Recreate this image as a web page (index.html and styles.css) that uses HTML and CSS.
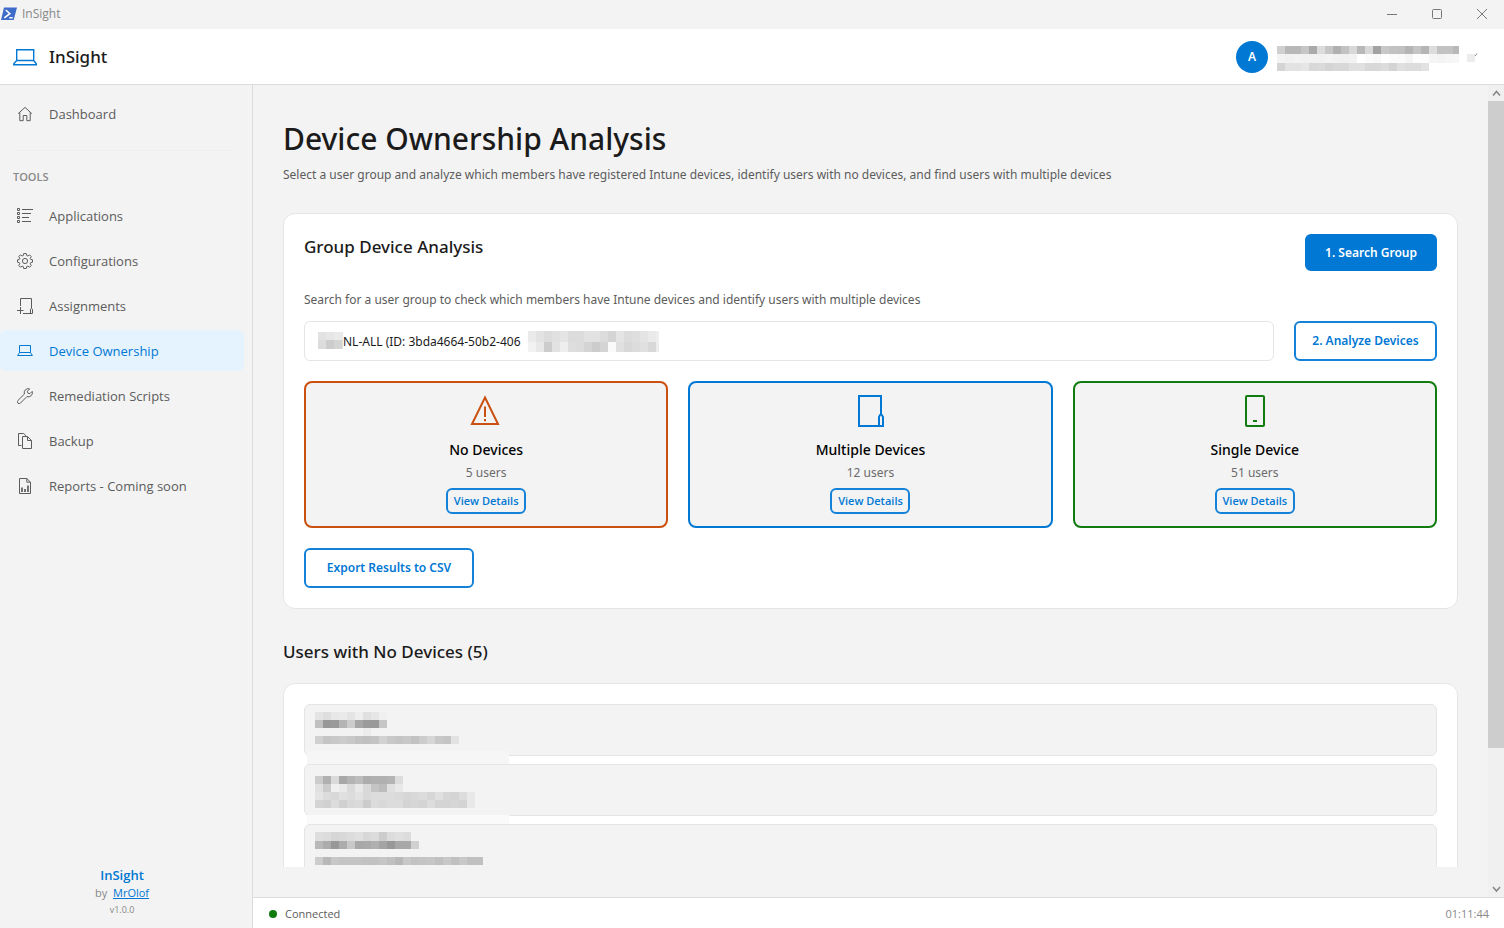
FILE: index.html
```html
<!DOCTYPE html>
<html lang="en">
<head>
<meta charset="utf-8">
<title>InSight</title>
<link rel="stylesheet" href="styles.css">
</head>
<body>
<div class="app">
  <div class="titlebar">
    <svg class="ps-icon" width="17" height="14" viewBox="0 0 17 14"><path d="M3 .5h13L12.700 13H0z" fill="#3f6bc9"/><path d="M4.800 3l4 3.600-5.500 4.200M8.300 10.800h3.400" fill="none" stroke="#fff" stroke-width="1.600"/></svg>
    <span class="titlebar-name">InSight</span>
    <div class="window-buttons">
      <button type="button" aria-label="Minimize"><svg width="12" height="12" viewBox="0 0 12 12"><path d="M1 6.500h10"/></svg></button>
      <button type="button" aria-label="Maximize"><svg width="12" height="12" viewBox="0 0 12 12"><rect x="1.500" y="1.500" width="9" height="9" rx="1"/></svg></button>
      <button type="button" aria-label="Close"><svg width="12" height="12" viewBox="0 0 12 12"><path d="M1 1l10 10M11 1L1 11"/></svg></button>
    </div>
  </div>

  <header class="header">
    <svg class="line-icon accent" width="24" height="18" viewBox="0 0 24 18"><path d="M3.700 12.500V1.700h17v10.800M3.700 12.500h17l2.600 3.200v1H.8v-1z"/></svg>
    <span class="brand">InSight</span>
    <div class="account">
      <span class="avatar">A</span>
      <svg class="mosaic account-text" width="182" height="26" data-rows="8:d0 b8 b8 c6 aa dc c6 b0 c2 d8 b8 d8 a2 c8 c2 c0 b4 c4 b4 dc c2 c2 b8|9:f3 f1 f3 f1 f1 f1 f3 f1 f0 f2 ff fb f8 fe fb fa f5 fd fc f5 f3 f6 f7|8:d4 e2 e2 e6 d8 da d4 d8 d8 e0 e0 d8 d8 dc d4 e0 dc dc e2"></svg>
      <svg class="chevron" width="12" height="12" viewBox="0 0 12 12"><path d="M1 3h8v8H1z" fill="#ececec"/><path d="M9 5l2-2.500" stroke="#888"/></svg>
    </div>
  </header>

  <div class="body">
    <aside class="sidebar">
      <nav class="nav">
        <a class="nav-item" href="#dashboard"><svg class="line-icon" width="16" height="16" viewBox="0 0 16 16"><path d="M1.200 7.600L8 1.400l6.800 6.200M2.800 6.300v8.400h3.400V9.500h3.600v5.200h3.400V6.300"/></svg>Dashboard</a>
        <div class="nav-divider"></div>
        <div class="nav-heading">TOOLS</div>
        <a class="nav-item" href="#applications"><svg class="line-icon" width="16" height="16" viewBox="0 0 16 16"><path d="M.5.500h2v2h-2zM.5 4.500h2v2h-2zM.5 8.500h2v2h-2zM.5 12.500h2v2h-2zM5 1.500h11M5 5.500h9M5 9.500h7M5 13.500h9"/></svg>Applications</a>
        <a class="nav-item" href="#configurations"><svg class="line-icon" width="16" height="16" viewBox="0 0 16 16"><circle cx="8" cy="8" r="2.600"/><path d="M6.700.6h2.600l.4 1.900 1.200.5 1.700-1.100 1.700 1.700L13.200 5.200l.5 1.200 1.800.4v2.400l-1.800.4-.5 1.200 1.100 1.700-1.700 1.700-1.700-1.100-1.200.5-.4 1.900H6.700l-.4-1.900-1.200-.5-1.700 1.100-1.700-1.700 1.100-1.700-.5-1.200L.5 9.200V6.800l1.800-.4.5-1.200L1.700 3.600l1.700-1.700L5.100 3l1.200-.5z"/></svg>Configurations</a>
        <a class="nav-item" href="#assignments"><svg class="line-icon" width="16" height="16" viewBox="0 0 16 16"><path d="M3.500 8V.5h11v9.700M6 15.500h9.500v-4.300q-1.200-1.800-2 0v4.300M0 12.500h6.500M3.500 9v7"/></svg>Assignments</a>
        <a class="nav-item active" href="#ownership"><svg class="line-icon" width="16" height="16" viewBox="0 0 16 16"><path d="M2.500 9.500v-7h11v7M2.500 9.500h11l1.900 3H.6z"/></svg>Device Ownership</a>
        <a class="nav-item" href="#scripts"><svg class="line-icon" width="16" height="16" viewBox="0 0 16 16"><path d="M12.700.9a4.100 4.100 0 0 0-5.300 5.200L.9 12.500a1.700 1.700 0 0 0 2.500 2.600l6.500-6.500a4.100 4.100 0 0 0 5.300-5.200l-2.300 2.300-2-.5-.5-2z"/></svg>Remediation Scripts</a>
        <a class="nav-item" href="#backup"><svg class="line-icon" width="16" height="16" viewBox="0 0 16 16"><path d="M4.500 12.500h-3v-12h5.200l2.800 2.800M5.500 3.500h5l4 4v8h-9zM10.500 3.500v4h4"/></svg>Backup</a>
        <a class="nav-item" href="#reports"><svg class="line-icon" width="16" height="16" viewBox="0 0 16 16"><path d="M2.500.5h7.300l3.700 3.700v11.300h-11zM9.800.5v3.700h3.700"/><path d="M5 14V9.500M8 14v-3M11 14V7.500" stroke-width="1.700"/></svg>Reports - Coming soon</a>
      </nav>
      <div class="about">
        <div class="about-name">InSight</div>
        <div class="about-by">by <a href="#author">MrOlof</a></div>
        <div class="about-version">v1.0.0</div>
      </div>
    </aside>

    <div class="workspace">
      <div class="scroll-area">
        <main class="content">
          <h1>Device Ownership Analysis</h1>
          <p class="lead">Select a user group and analyze which members have registered Intune devices, identify users with no devices, and find users with multiple devices</p>

          <section class="panel">
            <div class="panel-head">
              <h2>Group Device Analysis</h2>
              <button type="button" class="btn primary">1. Search Group</button>
            </div>
            <label class="hint" for="group">Search for a user group to check which members have Intune devices and identify users with multiple devices</label>
            <div class="search-row">
              <div class="field">
                <input id="group" type="text" value="NL-ALL (ID: 3bda4664-50b2-406">
                <svg class="mosaic mask-start" width="25" height="17" data-rows="8:e2 e6 ea e8|9:dc cc d4 e0"></svg>
                <svg class="mosaic mask-end" width="131" height="21" data-rows="11:ea e2 dc e0 e4 dc dc e2 e2 dc d4 e4 dc de e4 ea ee|10:f2 e8 cc e2 ee de dc d4 cc d4 fa e0 d8 dc e0 d8 ec"></svg>
              </div>
              <button type="button" class="btn analyze">2. Analyze Devices</button>
            </div>
            <div class="cards">
              <article class="card none">
                <svg class="card-icon" width="36" height="36" viewBox="0 0 36 36"><path d="M17 4.500L30 31H4z"/><path d="M17 13.500v10.500M17 26v2.300"/></svg>
                <h3>No Devices</h3><p>5 users</p>
                <button type="button" class="btn small">View Details</button>
              </article>
              <article class="card multiple">
                <svg class="card-icon" width="36" height="36" viewBox="0 0 36 36"><path d="M29 21V3H7v30h24V24q-2.300-5-4 0v9"/></svg>
                <h3>Multiple Devices</h3><p>12 users</p>
                <button type="button" class="btn small">View Details</button>
              </article>
              <article class="card single">
                <svg class="card-icon" width="36" height="36" viewBox="0 0 36 36"><rect x="9" y="3" width="18" height="30" rx="1"/><path d="M16 28h4"/></svg>
                <h3>Single Device</h3><p>51 users</p>
                <button type="button" class="btn small">View Details</button>
              </article>
            </div>
            <button type="button" class="btn export">Export Results to CSV</button>
          </section>

          <h2 class="list-title">Users with No Devices (5)</h2>
          <section class="panel users">
            <div class="user"><svg class="mosaic" width="152" height="40" data-rows="8:e4 de e8 ea e4 ee e0 e6 f0|8:c0 98 9a b4 cc a6 9a 9a c6|8:f2 f2 f2 f2 f2 f2 ec|8:d0 c4 c8 cc c8 c2 c0 c4 d2 c8 c4 c8 c2 cc d6 c8 c4 e2"></svg></div>
            <div class="user"><svg class="mosaic" width="168" height="40" data-rows="4:f2|8:cc b0 da a8 b4 bc ac b0 b0 b4 dc|8:e0 cc f0 ea da e8 d8 c4 bc e0 e8|8:e4 dc d8 e0 dc e2 d8 dc dc dc da d6 d8 dc d6 e0 d6 d4 dc e8|8:d4 d0 dc d0 d8 da cc dc d8 dc dc d4 d6 d4 dc d4 d4 d6 d4 e8"></svg></div>
            <div class="user"><svg class="mosaic" width="176" height="42" data-rows="9:de dc d6 d8 dc e0 d8 dc cc dc e0 dc|8:b8 ac 98 ac c8 a8 aa b0 a4 98 a8 a8 d0|8:f2|8:cc b8 c8 c4 c4 c4 c2 c2 c6 c0 b8 c8 c2 c4 c6 c0 c8 c0 c8 c0 c0"></svg></div>
            <div class="user"></div>
            <div class="user"></div>
          </section>
        </main>
        <div class="scrollbar">
          <svg width="16" height="16" viewBox="0 0 16 16"><path d="M5 10.500l3.500-4 3.500 4"/></svg>
          <div class="track"><div class="thumb"></div></div>
          <svg width="16" height="16" viewBox="0 0 16 16"><path d="M5 6l3.500 4L12 6"/></svg>
        </div>
      </div>
      <footer class="status">
        <span class="dot"></span><span class="state">Connected</span><time>01:11:44</time>
      </footer>
    </div>
  </div>
</div>
<script src="mosaic.js"></script>
</body>
</html>
```
FILE: styles.css
```css
* { box-sizing: border-box; }

body {
  margin: 0;
  background: #f3f3f3;
  color: #1b1b1b;
  font: 12px/20px "Noto Sans", "Open Sans", sans-serif;
}

h1, h2, h3, p { margin: 0; font-weight: 500; }
button, input { font: inherit; }
svg { flex: none; display: block; fill: none; }

.app { display: flex; flex-direction: column; height: 100vh; overflow: hidden; }

.titlebar { display: flex; align-items: center; flex: none; height: 29px; padding: 0 0 2px 1px; color: #888; }
.titlebar-name { margin-left: 4px; font-family: "Open Sans", sans-serif; line-height: 16px; }
.window-buttons { display: flex; margin-left: auto; }
.window-buttons button {
  display: flex; align-items: center; justify-content: center;
  width: 45px; height: 26px; padding: 0; border: 0; background: none;
}
.window-buttons svg { stroke: #777; }

.header {
  display: flex; align-items: center; flex: none;
  height: 56px; padding: 0 26px 0 13px;
  background: #fff; border-bottom: 1px solid #dcdcdc;
}
.line-icon { stroke: currentColor; stroke-width: 1; }
.accent { color: #0078d4; stroke-width: 1.4; }
.brand { margin-left: 12px; font-size: 17px; line-height: 24px; font-weight: 500; }
.account { display: flex; align-items: center; margin-left: auto; }
.avatar {
  width: 32px; height: 32px; margin-right: 9px; border-radius: 50%;
  background: #0078d4; color: #fff; line-height: 32px; font-weight: 600; text-align: center;
}
.account-text { margin-top: 4px; }
.chevron { margin-left: 7px; }

.body { display: flex; flex: 1; min-height: 0; }

.sidebar {
  display: flex; flex-direction: column; flex: none;
  width: 253px; border-right: 1px solid #dcdcdc;
  font-family: "Open Sans", "Noto Sans", sans-serif;
}
.nav { display: flex; flex-direction: column; gap: 4px; padding: 8px 8px 0 0; }
.nav-item {
  display: flex; align-items: center; gap: 16px;
  height: 41px; padding-left: 17px; border-radius: 6px;
  color: #5c5c5c; font-size: 13px; text-decoration: none;
}
.nav-item.active { background: #e5f3ff; color: #0078d4; }
.nav-divider { height: 1px; margin: 12px 12px 12px 13px; background: #efefef; }
.nav-heading { padding-left: 13px; margin-bottom: 4px; color: #888; font-size: 11px; line-height: 20px; font-weight: 600; }
.about { margin-top: auto; padding: 0 8px 9px 0; text-align: center; color: #888; }
.about-name { color: #0078d4; font-size: 13px; line-height: 20px; font-weight: 600; }
.about-by { font-size: 11px; line-height: 16px; }
.about-by a { margin-left: 3px; color: #0078d4; }
.about-version { font-size: 9px; line-height: 18px; }

.workspace { display: flex; flex-direction: column; flex: 1; min-width: 0; }
.scroll-area { display: flex; flex: 1; min-height: 0; }
.content { flex: 1; min-width: 0; margin: 30px; overflow: hidden; }
h1 { font-size: 30px; line-height: 48px; }
.lead { margin: 2px 0 28px; color: #5c5c5c; font-weight: 400; }

.panel { padding: 20px; border: 1px solid #e5e5e5; border-radius: 12px; background: #fff; }
.panel-head { display: flex; align-items: flex-start; justify-content: space-between; }
h2 { font-size: 17px; line-height: 26px; }
.btn {
  height: 40px; padding: 0 14px; border: 2px solid #1482d8; border-radius: 6px;
  background: #fff; color: #0078d4; font-weight: 600; white-space: nowrap;
}
.btn.primary { width: 132px; height: 37px; border-color: #0078d4; background: #0078d4; color: #fff; }
.btn.analyze { width: 143px; }
.btn.export { display: block; width: 170px; }
.btn.small {
  width: 80px; height: 26px; padding: 0; background: transparent;
  font-family: "Open Sans", sans-serif; font-size: 11px; line-height: 16px;
}
.hint { display: block; margin: 19px 0 11px; color: #5c5c5c; }
.search-row { display: flex; gap: 20px; }
.field { position: relative; flex: 1; }
.field input {
  display: block; width: 100%; height: 40px; padding: 0 38px;
  border: 1px solid #e5e5e5; border-radius: 6px; background: #fff; color: #1b1b1b; outline: 0;
}
.mask-start, .mask-end { position: absolute; }
.mask-start { left: 14px; top: 11px; }
.mask-end { left: 224px; top: 10px; }

.cards { display: grid; grid-template-columns: repeat(3, 1fr); gap: 20px; margin: 20px 0; }
.card {
  display: flex; flex-direction: column; align-items: center;
  padding: 10px 10px 12px; border: 2px solid; border-radius: 8px; background: #f3f3f3;
}
.card.none { border-color: #ca5010; }
.card.multiple { border-color: #0078d4; }
.card.single { border-color: #107c10; }
.card-icon { stroke-width: 2; }
.none .card-icon { stroke: #ca5010; }
.multiple .card-icon { stroke: #0078d4; }
.single .card-icon { stroke: #107c10; }
.card h3 { margin-top: 11px; color: #000; font-size: 14px; line-height: 20px; }
.card p { margin: 3px 0 5px; color: #6b6b6b; line-height: 20px; font-weight: 400; }

.list-title { margin: 30px 0 18px; }
.users { display: flex; flex-direction: column; gap: 8px; }
.user { position: relative; height: 52px; padding: 7px 10px; border: 1px solid #e5e5e5; border-radius: 6px; background: #f3f3f3; }
.user:nth-child(-n+2)::after { content: ""; position: absolute; left: 2px; top: 46px; width: 202px; height: 18px; background: #f6f6f6; }
.user:nth-child(2)::after { top: 50px; height: 9px; background: #fafafa; }

.scrollbar { display: flex; flex-direction: column; flex: none; width: 16px; background: #f0f0f0; }
.scrollbar svg { stroke: #858585; stroke-width: 1.5; }
.track { flex: 1; }
.thumb { height: 83%; background: #cdcdcd; }

.status {
  display: flex; align-items: center; flex: none;
  height: 31px; padding: 2px 15px 0 16px; border-top: 1px solid #dcdcdc; background: #fff;
  font-family: "Open Sans", sans-serif; font-size: 11px;
}
.dot { width: 8px; height: 8px; border-radius: 50%; background: #107c10; }
.state { margin-left: 8px; color: #5c5c5c; }
.status time { margin-left: auto; color: #888; }
```
FILE: mosaic.js
```js
// Fills each .mosaic with grey cells. Rows are "height:shade shade ...", split by "|".
document.querySelectorAll(".mosaic").forEach((svg) => {
  let y = 0;
  svg.setAttribute("shape-rendering", "crispEdges");
  svg.dataset.rows.split("|").forEach((row) => {
    const [height, shades] = row.split(":");
    shades.split(" ").forEach((shade, i) => {
      const cell = document.createElementNS("http://www.w3.org/2000/svg", "rect");
      cell.setAttribute("x", i * 8);
      cell.setAttribute("y", y);
      cell.setAttribute("width", 8);
      cell.setAttribute("height", height);
      cell.setAttribute("fill", "#" + shade.repeat(3));
      svg.append(cell);
    });
    y += Number(height);
  });
});
```
